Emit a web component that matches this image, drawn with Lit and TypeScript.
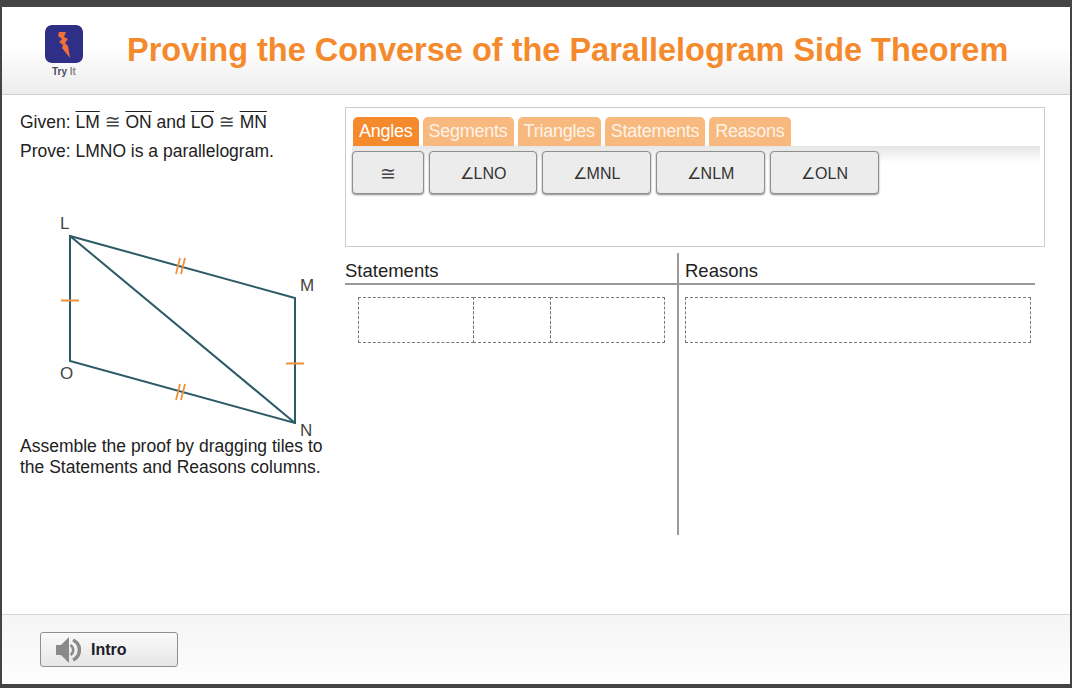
import { LitElement, html, css, svg } from 'lit';
import { customElement } from 'lit/decorators.js';

const TABS = ['Angles', 'Segments', 'Triangles', 'Statements', 'Reasons'];
const TILES = [
  { label: html`<span class="cong">≅</span>`, width: 72 },
  { label: '∠LNO', width: 108 },
  { label: '∠MNL', width: 109 },
  { label: '∠NLM', width: 109 },
  { label: '∠OLN', width: 109 },
];

// double tick across a slanted side
const doubleTick = (x: number, y: number) => svg`
  <path d="M${x - 4} ${y + 8} L${x} ${y - 8} M${x + 1} ${y + 8} L${x + 5} ${y - 8}" />
`;

@customElement('app-root')
export class AppRoot extends LitElement {
  static styles = css`
    :host {
      display: block;
      width: 1072px;
      height: 688px;
      box-sizing: border-box;
      border: solid #444444;
      border-width: 7px 2px 4px 2px;
      background: #fff;
      font-family: 'Liberation Sans', Arial, sans-serif;
      color: #222;
      overflow: hidden;
    }

    .app {
      display: flex;
      flex-direction: column;
      height: 100%;
    }

    header {
      flex: none;
      height: 87px;
      box-sizing: content-box;
      display: flex;
      align-items: flex-start;
      border-bottom: 1px solid #cfcfcf;
      background: linear-gradient(#ffffff 0%, #ffffff 45%, #ececec 100%);
    }

    .logo {
      flex: none;
      margin: 18px 0 0 42px;
      width: 40px;
      display: flex;
      flex-direction: column;
      align-items: center;
    }

    .logo svg {
      display: block;
    }

    .try {
      margin-top: 3px;
      font-size: 10px;
      line-height: 12px;
      font-weight: bold;
      color: #4a4a5e;
      white-space: nowrap;
    }

    .try span {
      color: #8a8a8a;
    }

    h1 {
      margin: 24px 0 0 43px;
      font-size: 32.5px;
      line-height: 38px;
      font-weight: bold;
      color: #f58a2c;
      white-space: nowrap;
    }

    main {
      flex: 1;
      display: flex;
      min-height: 0;
    }

    .left {
      flex: none;
      width: 343px;
      box-sizing: border-box;
      padding: 13px 0 0 18px;
      font-size: 17.5px;
    }

    .given,
    .prove {
      height: 29px;
      line-height: 29px;
      white-space: nowrap;
    }

    .over {
      text-decoration: overline;
    }

    .cong {
      font-family: 'DejaVu Sans', sans-serif;
      font-size: 19px;
      line-height: 1;
      color: #444;
    }

    .figure {
      display: block;
      margin: 41px 0 0 0;
      overflow: visible;
    }

    .figure text {
      font-size: 17px;
      fill: #444;
      font-family: 'Liberation Sans', Arial, sans-serif;
    }

    .assemble {
      margin: 0;
      line-height: 21px;
      white-space: nowrap;
    }

    .right {
      flex: none;
      width: 700px;
      padding-top: 12px;
    }

    .bank {
      height: 140px;
      box-sizing: border-box;
      border: 1px solid #cccccc;
      padding: 9px 4px 0 6px;
    }

    .tabs {
      display: flex;
      gap: 4px;
      padding-left: 1px;
    }

    .tab {
      height: 29px;
      line-height: 28px;
      padding: 0 6px;
      border-radius: 5px 5px 0 0;
      background: #f8b97f;
      color: #fdf3e8;
      font-size: 18px;
      letter-spacing: -0.25px;
    }

    .tab.active {
      background: #f58a2c;
      color: #fff;
    }

    .pane {
      display: flex;
      gap: 5px;
      padding-top: 5px;
      background: linear-gradient(#e6e6e6, #ffffff) top / 100% 17px no-repeat;
    }

    .tile {
      height: 43px;
      box-sizing: border-box;
      padding-top: 2px;
      display: flex;
      align-items: center;
      justify-content: center;
      border: 1px solid #8f8f8f;
      border-radius: 4px;
      background: #ececec;
      box-shadow: 0 1px 2px #888;
      font-size: 16px;
      color: #333;
    }

    .proof {
      margin-top: 6px;
      height: 282px;
      display: grid;
      grid-template-columns: 332px 358px;
    }

    .col {
      display: flex;
      flex-direction: column;
    }

    .col + .col {
      border-left: 2px solid #999999;
    }

    .col h2 {
      margin: 0;
      flex: none;
      height: 28px;
      padding-top: 2px;
      box-sizing: content-box;
      line-height: 31px;
      font-size: 18.5px;
      font-weight: normal;
      color: #222;
      border-bottom: 2px solid #999999;
    }

    .col + .col h2 {
      padding-left: 6px;
    }

    .drops {
      display: flex;
      margin: 12px 0 0 13px;
    }

    .col + .col .drops {
      margin-left: 6px;
    }

    .drop {
      height: 46px;
      box-sizing: border-box;
      border: 1px dashed #777777;
    }

    .drop + .drop {
      margin-left: -1px;
    }

    footer {
      flex: none;
      height: 52px;
      border-top: 1px solid #d4d4d4;
      background: linear-gradient(#f5f5f5, #fdfdfd);
      padding: 17px 0 0 38px;
      box-sizing: content-box;
    }

    .intro {
      width: 138px;
      height: 35px;
      box-sizing: border-box;
      display: flex;
      align-items: center;
      padding-left: 14px;
      gap: 10px;
      border: 1px solid #8f8f8f;
      border-radius: 3px;
      background: linear-gradient(#fafafa, #e6e6e6);
      font-size: 16px;
      font-weight: bold;
      color: #1c1c2a;
    }
  `;

  private _renderFigure() {
    return html`
      <svg class="figure" width="325" height="229" viewBox="0 0 325 229">
        <g transform="translate(-20 -207)">
          <g fill="none" stroke="#2c5a66" stroke-width="2">
            <path d="M70 236 L295 298 L295 423 L70 361 Z" />
            <path d="M70 236 L295 423" />
          </g>
          <g fill="none" stroke="#f0913a" stroke-width="1.8">
            <path d="M61 300.5 H79 M286 363.5 H304" />
            ${doubleTick(180, 266)} ${doubleTick(180, 392)}
          </g>
          <text x="60" y="229">L</text>
          <text x="300" y="291">M</text>
          <text x="60" y="379">O</text>
          <text x="300" y="436">N</text>
        </g>
      </svg>
    `;
  }

  render() {
    return html`
      <div class="app">
        <header>
          <div class="logo">
            <svg width="38" height="38" viewBox="0 0 38 38">
              <rect width="38" height="38" rx="7" fill="#2f2f87" />
              <path
                d="M14 7 L21 7 L19 12 L23 14 L20 18 L23 21 L25 33 L17 23 L18 20 L14 17 L17 14 L13 11 Z"
                fill="#f0703a"
              />
            </svg>
            <div class="try">Try <span>It</span></div>
          </div>
          <h1>Proving the Converse of the Parallelogram Side Theorem</h1>
        </header>
        <main>
          <section class="left">
            <div class="given">
              Given: <span class="over">LM</span> <span class="cong">≅</span>
              <span class="over">ON</span> and <span class="over">LO</span>
              <span class="cong">≅</span> <span class="over">MN</span>
            </div>
            <div class="prove">Prove: LMNO is a parallelogram.</div>
            ${this._renderFigure()}
            <p class="assemble">
              Assemble the proof by dragging tiles to<br />the Statements and Reasons columns.
            </p>
          </section>
          <section class="right">
            <div class="bank">
              <div class="tabs">
                ${TABS.map(
                  (t, i) => html`<div class="tab ${i === 0 ? 'active' : ''}">${t}</div>`
                )}
              </div>
              <div class="pane">
                ${TILES.map(
                  (t) => html`<div class="tile" style="width:${t.width}px">${t.label}</div>`
                )}
              </div>
            </div>
            <div class="proof">
              <div class="col">
                <h2>Statements</h2>
                <div class="drops">
                  <div class="drop" style="width:116px"></div>
                  <div class="drop" style="width:78px"></div>
                  <div class="drop" style="width:115px"></div>
                </div>
              </div>
              <div class="col">
                <h2>Reasons</h2>
                <div class="drops">
                  <div class="drop" style="width:346px"></div>
                </div>
              </div>
            </div>
          </section>
        </main>
        <footer>
          <div class="intro">
            <svg width="26" height="28" viewBox="0 0 26 28">
              <path d="M1 9 H6 L14 1 V27 L6 19 H1 Z" fill="#8a8a8a" />
              <path
                d="M15.5 9 A6 6 0 0 1 15.5 19"
                fill="none"
                stroke="#8a8a8a"
                stroke-width="2.5"
              />
              <path
                d="M18 4 A11 11 0 0 1 18 24"
                fill="none"
                stroke="#8a8a8a"
                stroke-width="3.5"
              />
            </svg>
            Intro
          </div>
        </footer>
      </div>
    `;
  }
}
